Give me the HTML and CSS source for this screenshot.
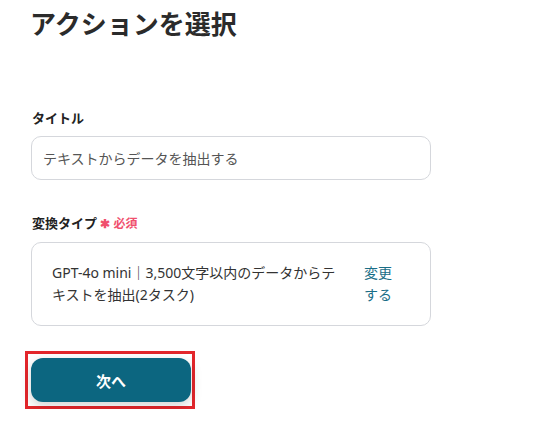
FILE: index.html
```html
<!DOCTYPE html>
<html lang="ja">
<head>
<meta charset="utf-8">
<link rel="stylesheet" href="styles.css">
</head>
<body>
<div class="page">
  <h1 class="title">アクションを選択</h1>
  <div class="field field-first">
    <div class="label">タイトル</div>
    <div class="input">テキストからデータを抽出する</div>
  </div>
  <div class="field field-second">
    <div class="label">変換タイプ <span class="req"><span class="ast">✱</span>必須</span></div>
    <div class="select-box">
      <div class="select-text">GPT-4o mini｜3,500文字以内のデータからテキストを抽出(2タスク)</div>
      <div class="select-link">変更する</div>
    </div>
  </div>
  <div class="actions">
    <div class="highlight">
      <button class="btn">次へ</button>
    </div>
  </div>
</div>
</body>
</html>
```

FILE: styles.css
```css
html, body {
  margin: 0;
  padding: 0;
  background: #ffffff;
}
body {
  font-family: "Noto Sans", "Noto Sans CJK JP", sans-serif;
  color: #333333;
}
.page {
  padding: 6px 0 0 31px;
  width: 400px;
}
.title {
  margin: 0;
  font-size: 26px;
  line-height: 36px;
  font-weight: 700;
  color: #2b2b2b;
  margin-left: -1px;
}
.field-first {
  margin-top: 66px;
}
.field-second {
  margin-top: 33px;
}
.label {
  font-size: 13px;
  line-height: 20px;
  font-weight: 700;
  color: #222222;
  padding-left: 1px;
  margin-bottom: 8px;
}
.req {
  color: #f0506e;
  font-size: 12px;
  font-weight: 700;
}
.ast {
  font-size: 12px;
  margin-right: 3px;
}
.input {
  box-sizing: border-box;
  height: 44px;
  border: 1px solid #d5d7dc;
  border-radius: 10px;
  padding: 0 11px;
  display: flex;
  align-items: center;
  font-size: 14px;
  color: #555555;
}
.select-box {
  box-sizing: border-box;
  height: 84px;
  border: 1px solid #d5d7dc;
  border-radius: 10px;
  padding: 0 38px 0 20px;
  display: flex;
  align-items: center;
  gap: 20px;
}
.select-text {
  flex: 1;
  font-size: 14px;
  line-height: 22px;
  color: #333333;
}
.select-link {
  width: 28px;
  font-size: 14px;
  line-height: 22px;
  color: #1a6e87;
}
.actions {
  margin-top: 25px;
  margin-left: -6px;
}
.highlight {
  display: inline-block;
  border: 3px solid #e3262b;
  padding: 4px 1px 4px 3px;
}
.btn {
  display: block;
  width: 160px;
  height: 44px;
  border: none;
  border-radius: 12px;
  background: #0c6680;
  color: #ffffff;
  font-family: "Noto Sans CJK JP", "Noto Sans", sans-serif;
  font-size: 15px;
  font-weight: 700;
  box-shadow: 0 4px 12px rgba(0, 0, 0, 0.18);
}
```
